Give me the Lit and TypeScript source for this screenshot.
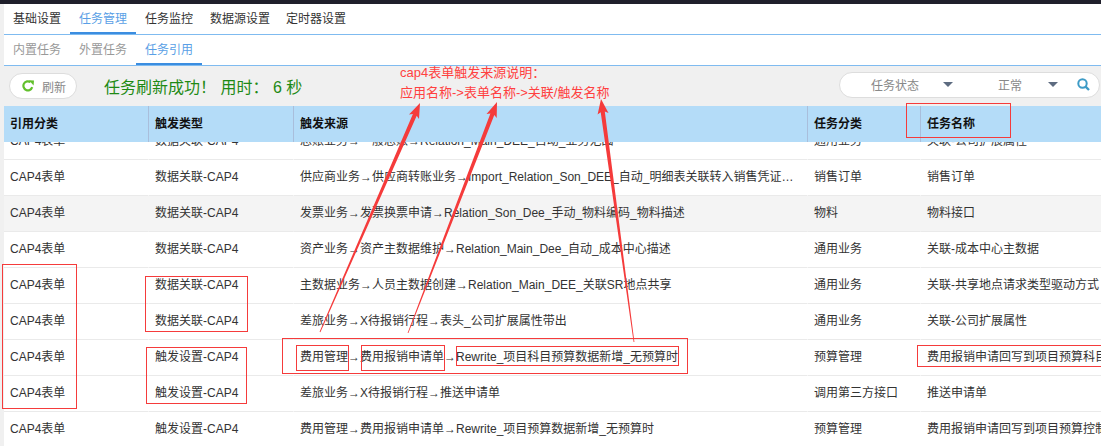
import { LitElement, html, css, svg } from "lit";
import { customElement } from "lit/decorators.js";

type Row = [string, string, string, string, string];

const ROWS: Row[] = [
  ["CAP4表单", "数据关联-CAP4", "总账业务→一般总账→Relation_Main_DEE_自动_业务范围", "通用业务", "关联-公司扩展属性"],
  ["CAP4表单", "数据关联-CAP4", "供应商业务→供应商转账业务→Import_Relation_Son_DEE_自动_明细表关联转入销售凭证信息表", "销售订单", "销售订单"],
  ["CAP4表单", "数据关联-CAP4", "发票业务→发票换票申请→Relation_Son_Dee_手动_物料编码_物料描述", "物料", "物料接口"],
  ["CAP4表单", "数据关联-CAP4", "资产业务→资产主数据维护→Relation_Main_Dee_自动_成本中心描述", "通用业务", "关联-成本中心主数据"],
  ["CAP4表单", "数据关联-CAP4", "主数据业务→人员主数据创建→Relation_Main_DEE_关联SR地点共享", "通用业务", "关联-共享地点请求类型驱动方式"],
  ["CAP4表单", "数据关联-CAP4", "差旅业务→X待报销行程→表头_公司扩展属性带出", "通用业务", "关联-公司扩展属性"],
  ["CAP4表单", "触发设置-CAP4", "费用管理→费用报销申请单→Rewrite_项目科目预算数据新增_无预算时", "预算管理", "费用报销申请回写到项目预算科目预算数据新增"],
  ["CAP4表单", "触发设置-CAP4", "差旅业务→X待报销行程→推送申请单", "调用第三方接口", "推送申请单"],
  ["CAP4表单", "触发设置-CAP4", "费用管理→费用报销申请单→Rewrite_项目预算数据新增_无预算时", "预算管理", "费用报销申请回写到项目预算控制数据新增"],
];

const HEAD = ["引用分类", "触发类型", "触发来源", "任务分类", "任务名称"];

const BOXES: [number, number, number, number][] = [
  [906.5, 103.5, 104, 34],
  [2.5, 264.5, 74, 144],
  [145.5, 276.5, 102, 55],
  [146.5, 347.5, 100, 56],
  [282.5, 338.5, 405, 35],
  [296.5, 345.5, 52, 25],
  [361.5, 345.5, 83, 25],
  [456.5, 346.5, 222, 19],
  [917.5, 345.5, 190, 21],
];

function arrow(x1: number, y1: number, x2: number, y2: number) {
  const len = Math.hypot(x2 - x1, y2 - y1);
  const ux = (x2 - x1) / len;
  const uy = (y2 - y1) / len;
  const nx = -uy;
  const ny = ux;
  const at = (d: number, w: number) => `${(x2 - ux * d + nx * w).toFixed(1)},${(y2 - uy * d + ny * w).toFixed(1)}`;
  const tailL = `${(x1 + nx * 0.4).toFixed(1)},${(y1 + ny * 0.4).toFixed(1)}`;
  const tailR = `${(x1 - nx * 0.4).toFixed(1)},${(y1 - ny * 0.4).toFixed(1)}`;
  return `${tailL} ${at(13, 2.1)} ${at(15, 5.5)} ${x2},${y2} ${at(15, -5.5)} ${at(13, -2.1)} ${tailR}`;
}

const ARROWS = [
  arrow(320, 332, 420, 103),
  arrow(408, 333, 497, 102),
  arrow(634, 342, 601, 99),
];

@customElement("app-root")
export class AppRoot extends LitElement {
  static styles = css`
    :host {
      display: block;
      position: relative;
      width: 1101px;
      height: 446px;
      overflow: hidden;
      background: #f0f0f0;
      font-family: "Liberation Sans", "Noto Sans CJK SC", sans-serif;
      font-size: 12px;
      color: #333;
    }
    .topbar { height: 4px; background: #1f1f2b; }
    .main { margin-left: 4px; }
    .tabs {
      display: flex;
      height: 30px;
      background: #fff;
      border-bottom: 1px solid #7fbbf0;
    }
    .tab {
      padding: 0 9px;
      line-height: 30px;
      height: 30px;
      box-sizing: border-box;
    }
    .tab.tight { padding: 0 8px; }
    .tabs.sub .tab { color: #999; }
    .tab.active, .tabs.sub .tab.active {
      color: #5a9fe6;
      border-bottom: 2px solid #3b8de0;
    }
    .toolbar {
      display: flex;
      align-items: center;
      height: 40px;
      background: #f0f0f0;
      padding-left: 5px;
    }
    .refresh {
      display: flex;
      align-items: center;
      box-sizing: border-box;
      width: 68px;
      height: 26px;
      padding-left: 12px;
      gap: 8px;
      background: #fff;
      border: 1px solid #ddd;
      border-radius: 13px;
      color: #888;
    }
    .msg {
      margin-left: 27px;
      font-size: 16px;
      color: #1e8a14;
      white-space: pre;
    }
    .filter {
      margin-left: auto;
      margin-right: 1px;
      margin-top: -3px;
      display: flex;
      align-items: center;
      box-sizing: border-box;
      width: 261px;
      height: 26px;
      padding-left: 31px;
      background: #fff;
      border: 1px solid #ddd;
      border-radius: 13px;
      color: #888;
    }
    .caret {
      width: 0;
      height: 0;
      border-left: 5px solid transparent;
      border-right: 5px solid transparent;
      border-top: 5px solid #5d6b80;
    }
    .c1 { margin-left: 24px; }
    .v { margin-left: 45px; }
    .c2 { margin-left: 26px; }
    .s { margin-left: 19px; display: block; }
    .grid {
      display: grid;
      grid-template-columns: 144px 145px 514px 113px 181px;
    }
    .head {
      height: 36px;
      background: #b4dcf8;
      font-weight: bold;
      color: #111;
      position: relative;
      z-index: 1;
    }
    .head div {
      line-height: 36px;
      padding-left: 6px;
      border-left: 1px solid #a9bedb;
    }
    .head div:first-child { border-left: 0; }
    .body {
      height: 304px;
      overflow: hidden;
      background: #fff;
    }
    .rows { margin-top: -18px; }
    .row { height: 36px; }
    .row.alt { background: #f4f4f4; }
    .cell {
      box-sizing: border-box;
      height: 36px;
      line-height: 35px;
      padding: 0 6px;
      border-left: 1px solid transparent;
      border-bottom: 1px solid #eaeaea;
      white-space: nowrap;
      overflow: hidden;
      text-overflow: ellipsis;
    }
    .cell:first-child { border-left: 0; }
    .cell.src { padding-right: 13px; }
    .cell.name { text-overflow: clip; }
    .overlay {
      position: absolute;
      left: 0;
      top: 0;
      z-index: 2;
      pointer-events: none;
    }
    .note {
      position: absolute;
      left: 400px;
      top: 63px;
      z-index: 3;
      font-size: 13px;
      line-height: 20px;
      color: #ff4040;
      white-space: nowrap;
    }
  `;

  render() {
    return html`
      <div class="topbar"></div>
      <div class="main">
        <div class="tabs">
          <div class="tab">基础设置</div>
          <div class="tab active">任务管理</div>
          <div class="tab">任务监控</div>
          <div class="tab tight">数据源设置</div>
          <div class="tab tight">定时器设置</div>
        </div>
        <div class="tabs sub">
          <div class="tab">内置任务</div>
          <div class="tab">外置任务</div>
          <div class="tab active">任务引用</div>
        </div>
        <div class="toolbar">
          <div class="refresh">
            <svg width="12" height="12" viewBox="0 0 12 12" fill="none">
              <path d="M10.2 7.2A4.5 4.5 0 1 1 8.6 2.2" stroke="#62c02c" stroke-width="2.2" />
              <path d="M7 0.2L12 0.4L11.6 5.4Z" fill="#62c02c" />
            </svg>
            <span>刷新</span>
          </div>
          <div class="msg">任务刷新成功！ 用时： 6 秒</div>
          <div class="filter">
            <span>任务状态</span>
            <i class="caret c1"></i>
            <span class="v">正常</span>
            <i class="caret c2"></i>
            <svg class="s" width="13" height="13" viewBox="0 0 13 13" fill="none">
              <circle cx="5.5" cy="5.5" r="4.2" stroke="#3d9bc6" stroke-width="2" />
              <path d="M8.6 8.6L12 12" stroke="#3d9bc6" stroke-width="2.4" />
            </svg>
          </div>
        </div>
        <div class="grid head">${HEAD.map((h) => html`<div>${h}</div>`)}</div>
        <div class="body">
          <div class="rows">
            ${ROWS.map(
              (r, i) => html`
                <div class="grid row ${i === 2 ? "alt" : ""}">
                  <div class="cell">${r[0]}</div>
                  <div class="cell">${r[1]}</div>
                  <div class="cell src">${r[2]}</div>
                  <div class="cell">${r[3]}</div>
                  <div class="cell name">${r[4]}</div>
                </div>
              `
            )}
          </div>
        </div>
      </div>
      <svg class="overlay" width="1101" height="446" viewBox="0 0 1101 446" fill="none">
        ${BOXES.map(
          ([x, y, w, h]) => svg`<rect x=${x} y=${y} width=${w} height=${h} stroke="#f53b3b" stroke-width="1" />`
        )}
        ${ARROWS.map((p) => svg`<polygon points=${p} fill="#f53b3b" />`)}
      </svg>
      <div class="note">cap4表单触发来源说明：<br />应用名称-&gt;表单名称-&gt;关联/触发名称</div>
    `;
  }
}
